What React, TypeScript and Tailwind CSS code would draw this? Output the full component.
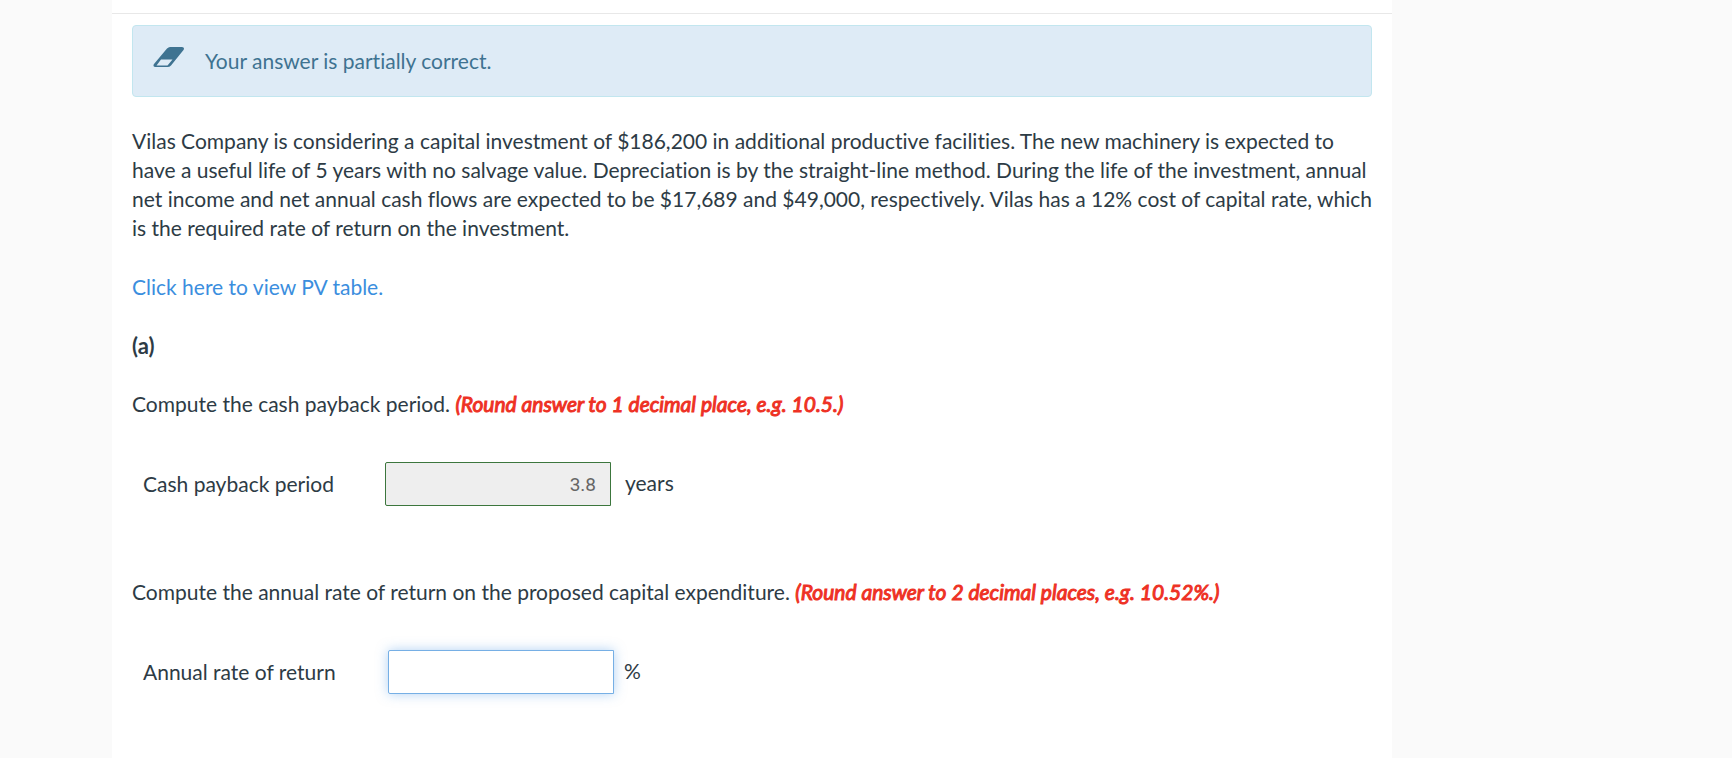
import React, { useState } from 'react';

const App: React.FC = () => {
  const [rate, setRate] = useState('');

  return (
    <div className="min-h-screen bg-[#fafafa] font-['Lato',sans-serif] text-[21px] leading-[29px] text-[#2d3b45] [font-variant-ligatures:none]">
      <main className="ml-28 mr-[340px] min-h-screen bg-white">
        <div className="h-3.5 border-b border-[#e8e8e8]" />

        <div className="px-5 pt-[11px]">
          <div className="flex h-[72px] items-center rounded border border-[#c2e6ef] bg-[#deebf6] pb-0.5 pl-5 text-[#3f7391]">
            <svg className="mb-1.5 h-6 w-8" viewBox="0 0 32 24" fill="none" aria-hidden="true">
              <path d="M17 2H29Q32 2.500 30.500 5L18 20.500Q16.500 22 14.500 22H2Q-0.500 21.500 1 19L14 3.500Q15.500 2 17 2ZM8 14.500L3.500 20.500H14.500L19.500 14.500Z" fill="currentColor" fillRule="evenodd" />
            </svg>
            <p className="ml-5">Your answer is partially correct.</p>
          </div>

          <p className="mt-[29px]">
            Vilas Company is considering a capital investment of $186,200 in additional productive facilities. The new machinery is expected to
            have a useful life of 5 years with no salvage value. Depreciation is by the straight-line method. During the life of the investment, annual
            net income and net annual cash flows are expected to be $17,689 and $49,000, respectively. Vilas has a 12% cost of capital rate, which
            is the required rate of return on the investment.
          </p>

          <p className="mt-[30px]">
            <a href="#pv-table" className="text-[#3b8ede]">Click here to view PV table.</a>
          </p>

          <p className="mt-[30px] text-[22px] font-bold">(a)</p>

          <p className="mt-[29px]">
            Compute the cash payback period.{' '}
            <em className="text-[#ee3124] [-webkit-text-stroke:1px]">(Round answer to 1 decimal place, e.g. 10.5.)</em>
          </p>

          <div className="mt-11 flex items-center pl-[11px]">
            <label htmlFor="payback" className="w-[242px] pb-0.5">Cash payback period</label>
            <input
              id="payback"
              type="text"
              readOnly
              value="3.8"
              className="h-11 w-[226px] rounded-l-xs border border-[#3c763d] bg-[#eeeeee] px-3.5 text-right font-['Roboto',sans-serif] text-[19px] text-[#666666]"
            />
            <span className="ml-3.5 pb-1">years</span>
          </div>

          <p className="mt-[71px]">
            Compute the annual rate of return on the proposed capital expenditure.{' '}
            <em className="text-[#ee3124] [-webkit-text-stroke:1px]">(Round answer to 2 decimal places, e.g. 10.52%.)</em>
          </p>

          <div className="mt-11 flex items-center pl-[11px]">
            <label htmlFor="rate" className="w-[245px] pb-0.5">Annual rate of return</label>
            <input
              id="rate"
              type="text"
              value={rate}
              onChange={e => setRate(e.target.value)}
              className="h-11 w-[226px] rounded-l-xs border border-[#76afe5] bg-white px-3.5 text-right font-['Roboto',sans-serif] text-[19px] shadow-[0_0_12px_rgba(102,165,233,0.5)] outline-none"
            />
            <span className="ml-2.5 pb-1">%</span>
          </div>
        </div>
      </main>
    </div>
  );
};

export default App;
